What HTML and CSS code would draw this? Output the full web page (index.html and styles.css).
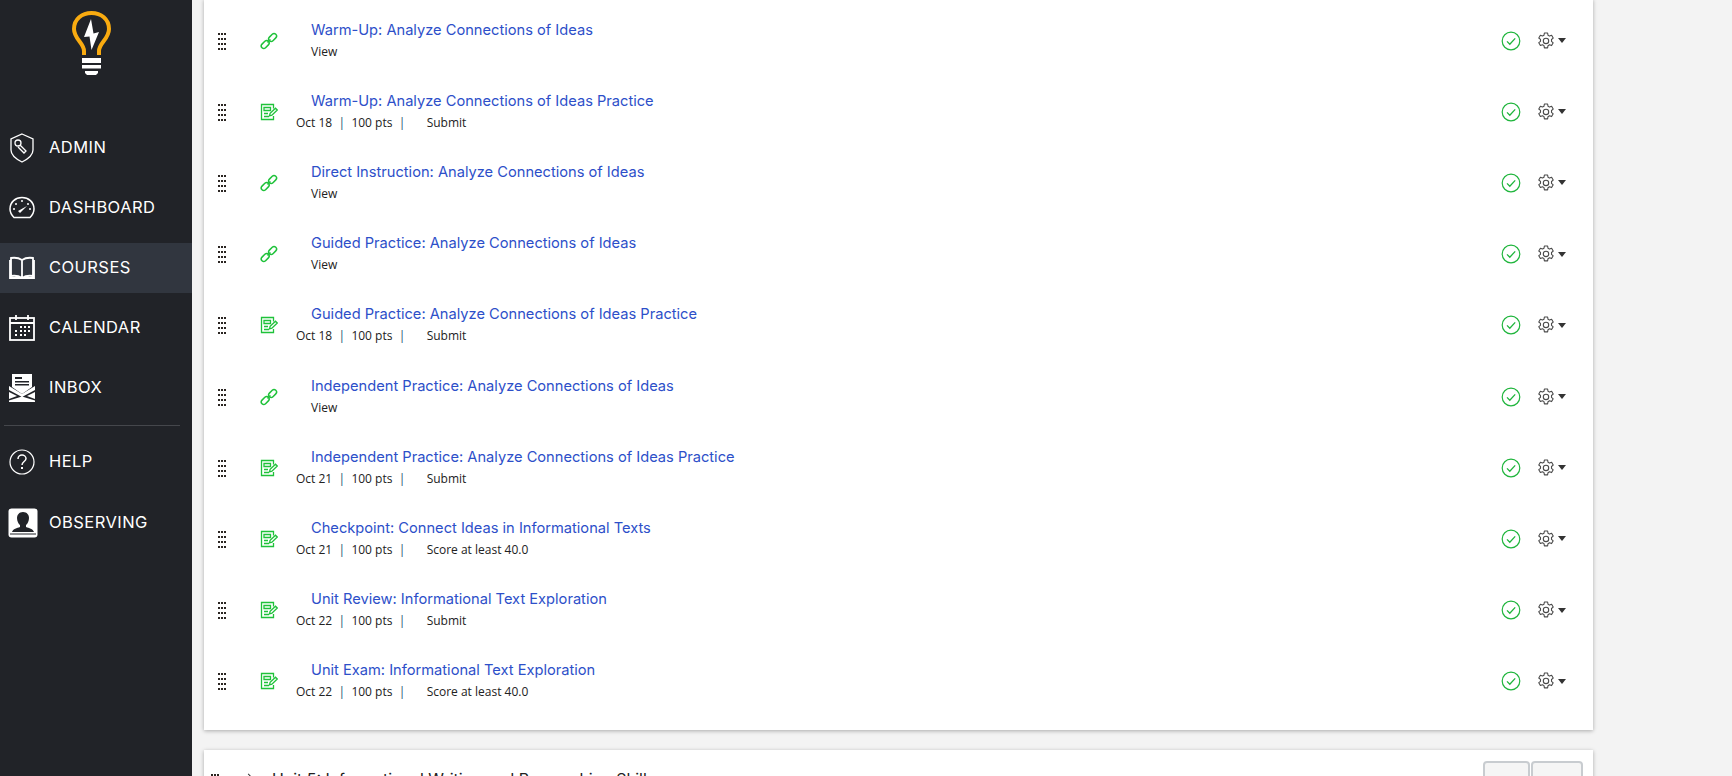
FILE: index.html
```html
<!DOCTYPE html>
<html lang="en">
<head>
  <meta charset="UTF-8" />
  <title>Modules</title>
  <link rel="stylesheet" href="styles.css">
</head>

<body>
  <svg class="sprites" width="0" height="0">
    <symbol id="i-drag" viewBox="0 0 10 18">
      <g fill="#2b2622">
        <rect x="1" y="1" width="2" height="2"/><rect x="4" y="1" width="2" height="2"/><rect x="7" y="1" width="2" height="2"/>
        <rect x="1" y="6" width="2" height="2"/><rect x="4" y="6" width="2" height="2"/><rect x="7" y="6" width="2" height="2"/>
        <rect x="1" y="11" width="2" height="2"/><rect x="4" y="11" width="2" height="2"/><rect x="7" y="11" width="2" height="2"/>
        <rect x="1" y="16" width="2" height="2"/><rect x="4" y="16" width="2" height="2"/><rect x="7" y="16" width="2" height="2"/>
      </g>
    </symbol>
    <symbol id="i-link" viewBox="0 0 18 18">
      <g fill="none" stroke="#1fc23a" stroke-width="1.5">
        <rect x="0.700" y="10" width="9" height="5" rx="2.500" transform="rotate(-45 5.200 12.500)"/>
        <rect x="8.100" y="3" width="9" height="5" rx="2.500" transform="rotate(-45 12.600 5.500)"/>
        <path d="M7.500 10.500 10.500 7.500"/>
      </g>
    </symbol>
    <symbol id="i-assign" viewBox="0 0 18 18">
      <g fill="none" stroke="#1fc23a" stroke-width="1.3">
        <path d="M13.500 5.500V1.500H1.500v15h12v-3.500"/>
        <path d="M4 4.500h6.500v3H4zM4 10.500h4M4 13.500h5"/>
        <path d="M9.500 12.800l.6-2.400 5.400-5.200 1.800 1.800-5.400 5.200z" fill="#fff"/>
      </g>
    </symbol>
    <symbol id="i-check" viewBox="0 0 20 20">
      <circle cx="10" cy="10" r="8.800" fill="none" stroke="#1fb53c" stroke-width="1.200"/>
      <path d="M6 10.400l2.800 2.800 5.400-5.800" fill="none" stroke="#1fb53c" stroke-width="1.300"/>
    </symbol>
    <symbol id="i-gear" viewBox="0 0 18 18">
      <path fill="none" stroke="#4a4a4a" stroke-width="1.100" stroke-linejoin="round" d="M7.400 1h3.200l.4 2.200 1.500.9 2.100-.8 1.600 2.800-1.700 1.400v1.900l1.700 1.400-1.600 2.800-2.100-.8-1.500.9-.4 2.200H7.400L7 13.600l-1.500-.9-2.100.8-1.600-2.800 1.700-1.400V7.400L1.800 6l1.600-2.800 2.100.8L7 3.200z"/>
      <circle cx="9" cy="8.900" r="2.700" fill="none" stroke="#4a4a4a" stroke-width="1.100"/>
    </symbol>
  </svg>

  <nav class="sidebar">
    <div class="logo">
      <svg width="40" height="64" viewBox="0 0 40 64">
        <path d="M12 44V40C12 32 2 28 2 18 2 8 10 2 19.500 2S37 8 37 18C37 28 27 32 27 40V44" fill="none" stroke="#f9ab10" stroke-width="4"/>
        <path d="M19 8 12 26l5.500-.5 2 13.500L27 21l-5.500 1.500z" fill="#fff"/>
        <rect x="10" y="47" width="19" height="5" fill="#fff"/>
        <rect x="10" y="54" width="19" height="3.500" fill="#fff"/>
        <path d="M13 60h13v2l-2 2h-9l-2-2z" fill="#fff"/>
      </svg>
    </div>

    <a class="nav-item">
      <svg width="26" height="30" viewBox="0 0 26 30"><g fill="none" stroke="#fff" stroke-width="1.300"><path d="M13 1 24 6v11c0 5-5 9-11 12C7 26 2 22 2 17V6z"/><circle cx="9" cy="10" r="3"/><path d="M11 12l6 6-2 2-6-6"/></g></svg>
      <span>ADMIN</span>
    </a>
    <a class="nav-item">
      <svg width="26" height="24" viewBox="0 0 26 24"><g fill="none" stroke="#fff" stroke-width="1.500"><path d="M5 21.500C2.500 19 1 16 1 13 1 6 6.500 1.500 13 1.500S25 6 25 13c0 3-1.500 6-4 8.500z"/></g><path d="M9 15l9-5-7 7z" fill="#fff"/><g fill="#fff"><circle cx="5" cy="13" r="1"/><circle cx="21" cy="13" r="1"/><circle cx="7" cy="8" r="1"/><circle cx="13" cy="5" r="1"/><circle cx="19" cy="8" r="1"/></g></svg>
      <span>DASHBOARD</span>
    </a>
    <a class="nav-item active">
      <svg width="26" height="24" viewBox="0 0 26 24"><g fill="none" stroke="#fff" stroke-width="1.800"><path d="M13 4C10 2 5 1.500 2 2v18c3-.5 8 0 11 2 3-2 8-2.500 11-2V2c-3-.5-8 0-11 2zM13 4v18"/><path d="M1 4v18h24V4"/></g></svg>
      <span>COURSES</span>
    </a>
    <a class="nav-item">
      <svg width="26" height="26" viewBox="0 0 26 26"><g fill="none" stroke="#fff" stroke-width="1.800"><rect x="1" y="3" width="24" height="22"/><path d="M1 8h24M7 0v5M19 0v5" /></g><g fill="#fff"><rect x="11" y="11" width="2" height="2"/><rect x="15" y="11" width="2" height="2"/><rect x="19" y="11" width="2" height="2"/><rect x="6" y="15" width="2" height="2"/><rect x="11" y="15" width="2" height="2"/><rect x="15" y="15" width="2" height="2"/><rect x="19" y="15" width="2" height="2"/><rect x="6" y="19" width="2" height="2"/><rect x="11" y="19" width="2" height="2"/><rect x="15" y="19" width="2" height="2"/></g></svg>
      <span>CALENDAR</span>
    </a>
    <a class="nav-item">
      <svg width="26" height="28" viewBox="0 0 26 28"><path d="M3 0h20v13l-10 7-10-7z" fill="#fff"/><path d="M6 3h7v2H6zM6 7h14v1.500H6zM6 10h14v1.500H6z" fill="#212328"/><path d="M0 12l13 8 13-8v4l-13 7-13-7zM0 18l8 4-8 3zM26 18l-8 4 8 3zM0 26.500l13-4 13 4V28H0z" fill="#fff"/></svg>
      <span>INBOX</span>
    </a>

    <hr class="nav-rule">

    <a class="nav-item nav-low">
      <svg width="26" height="26" viewBox="0 0 26 26"><circle cx="13" cy="13" r="12" fill="none" stroke="#fff" stroke-width="1.200"/><path d="M9 10c0-2.500 2-4 4-4s4 1.500 4 3.500c0 3-4 3-4 6.500" fill="none" stroke="#fff" stroke-width="1.500"/><rect x="12" y="18" width="2" height="2" fill="#fff"/></svg>
      <span>HELP</span>
    </a>
    <a class="nav-item nav-low">
      <svg class="nav-profile" width="30" height="30" viewBox="0 0 30 30"><rect x="0.500" y="0.500" width="29" height="29" rx="3" fill="#fff"/><path d="M15 4c4 0 6 3 6 6 0 3-1.500 6-3 7v2c3 1 7 2 8 5H4c1-3 5-4 8-5v-2c-1.500-1-3-4-3-7 0-3 2-6 6-6z" fill="#212328"/><path d="M2 26h26" stroke="#212328"/></svg>
      <span>OBSERVING</span>
    </a>
  </nav>

  <main class="content">
    <section class="card">
      <div class="row">
        <svg class="drag"><use href="#i-drag"/></svg>
        <svg class="type"><use href="#i-link"/></svg>
        <div class="info">
          <a class="title">Warm-Up: Analyze Connections of Ideas</a>
          <div class="meta view">View</div>
        </div>
        <svg class="check"><use href="#i-check"/></svg>
        <svg class="gear"><use href="#i-gear"/></svg>
        <span class="caret"></span>
      </div>
      <div class="row">
        <svg class="drag"><use href="#i-drag"/></svg>
        <svg class="type"><use href="#i-assign"/></svg>
        <div class="info">
          <a class="title">Warm-Up: Analyze Connections of Ideas Practice</a>
          <div class="meta"><span>Oct 18</span><i>|</i><span>100 pts</span><i>|</i><span class="req">Submit</span></div>
        </div>
        <svg class="check"><use href="#i-check"/></svg>
        <svg class="gear"><use href="#i-gear"/></svg>
        <span class="caret"></span>
      </div>
      <div class="row">
        <svg class="drag"><use href="#i-drag"/></svg>
        <svg class="type"><use href="#i-link"/></svg>
        <div class="info">
          <a class="title">Direct Instruction: Analyze Connections of Ideas</a>
          <div class="meta view">View</div>
        </div>
        <svg class="check"><use href="#i-check"/></svg>
        <svg class="gear"><use href="#i-gear"/></svg>
        <span class="caret"></span>
      </div>
      <div class="row">
        <svg class="drag"><use href="#i-drag"/></svg>
        <svg class="type"><use href="#i-link"/></svg>
        <div class="info">
          <a class="title">Guided Practice: Analyze Connections of Ideas</a>
          <div class="meta view">View</div>
        </div>
        <svg class="check"><use href="#i-check"/></svg>
        <svg class="gear"><use href="#i-gear"/></svg>
        <span class="caret"></span>
      </div>
      <div class="row">
        <svg class="drag"><use href="#i-drag"/></svg>
        <svg class="type"><use href="#i-assign"/></svg>
        <div class="info">
          <a class="title">Guided Practice: Analyze Connections of Ideas Practice</a>
          <div class="meta"><span>Oct 18</span><i>|</i><span>100 pts</span><i>|</i><span class="req">Submit</span></div>
        </div>
        <svg class="check"><use href="#i-check"/></svg>
        <svg class="gear"><use href="#i-gear"/></svg>
        <span class="caret"></span>
      </div>
      <div class="row">
        <svg class="drag"><use href="#i-drag"/></svg>
        <svg class="type"><use href="#i-link"/></svg>
        <div class="info">
          <a class="title">Independent Practice: Analyze Connections of Ideas</a>
          <div class="meta view">View</div>
        </div>
        <svg class="check"><use href="#i-check"/></svg>
        <svg class="gear"><use href="#i-gear"/></svg>
        <span class="caret"></span>
      </div>
      <div class="row">
        <svg class="drag"><use href="#i-drag"/></svg>
        <svg class="type"><use href="#i-assign"/></svg>
        <div class="info">
          <a class="title">Independent Practice: Analyze Connections of Ideas Practice</a>
          <div class="meta"><span>Oct 21</span><i>|</i><span>100 pts</span><i>|</i><span class="req">Submit</span></div>
        </div>
        <svg class="check"><use href="#i-check"/></svg>
        <svg class="gear"><use href="#i-gear"/></svg>
        <span class="caret"></span>
      </div>
      <div class="row">
        <svg class="drag"><use href="#i-drag"/></svg>
        <svg class="type"><use href="#i-assign"/></svg>
        <div class="info">
          <a class="title">Checkpoint: Connect Ideas in Informational Texts</a>
          <div class="meta"><span>Oct 21</span><i>|</i><span>100 pts</span><i>|</i><span class="req">Score at least 40.0</span></div>
        </div>
        <svg class="check"><use href="#i-check"/></svg>
        <svg class="gear"><use href="#i-gear"/></svg>
        <span class="caret"></span>
      </div>
      <div class="row">
        <svg class="drag"><use href="#i-drag"/></svg>
        <svg class="type"><use href="#i-assign"/></svg>
        <div class="info">
          <a class="title">Unit Review: Informational Text Exploration</a>
          <div class="meta"><span>Oct 22</span><i>|</i><span>100 pts</span><i>|</i><span class="req">Submit</span></div>
        </div>
        <svg class="check"><use href="#i-check"/></svg>
        <svg class="gear"><use href="#i-gear"/></svg>
        <span class="caret"></span>
      </div>
      <div class="row">
        <svg class="drag"><use href="#i-drag"/></svg>
        <svg class="type"><use href="#i-assign"/></svg>
        <div class="info">
          <a class="title">Unit Exam: Informational Text Exploration</a>
          <div class="meta"><span>Oct 22</span><i>|</i><span>100 pts</span><i>|</i><span class="req">Score at least 40.0</span></div>
        </div>
        <svg class="check"><use href="#i-check"/></svg>
        <svg class="gear"><use href="#i-gear"/></svg>
        <span class="caret"></span>
      </div>
    </section>

    <section class="card next-unit">
      <svg class="drag"><use href="#i-drag"/></svg>
      <span class="chevron"></span>
      <h3>Unit 5: Informational Writing and Researching Skills</h3>
      <div class="unit-btns">
        <button>+</button><button>&#9881;</button>
      </div>
    </section>
  </main>
</body>
</html>
```

FILE: styles.css
```css
html, body {
  margin: 0;
  height: 776px;
  overflow: hidden;
}

body {
  display: flex;
  background: #f3f3f3;
  font-family: "Open Sans", sans-serif;
  color: #222;
}

.sprites { position: absolute; }

/* sidebar */
.sidebar {
  width: 192px;
  height: 776px;
  flex: none;
  background: #212328;
  box-sizing: border-box;
  padding-top: 11px;
}

.logo {
  display: flex;
  justify-content: center;
  height: 112px;
  padding-right: 8px;
}

.nav-item {
  display: grid;
  grid-template-columns: 49px 1fr;
  align-items: center;
  height: 50px;
  margin-bottom: 10px;
  color: #fff;
  font-family: "Inter", sans-serif;
  font-size: 16.5px;
  letter-spacing: 0.45px;
}

.nav-item svg { margin-left: 9px; }
.nav-item .nav-profile { margin-left: 8px; }
.nav-item span { padding-bottom: 2px; }

.nav-item.active { background: #31363f; }
.nav-item.nav-low { margin-bottom: 11px; }

.nav-rule {
  border: 0;
  border-top: 1px solid #45474c;
  margin: 12px 12px 11px 4px;
}

/* main column */
.content {
  width: 1389px;
  margin-left: 12px;
  margin-top: -1px;
}

.card {
  background: #fff;
  box-shadow: 0 1px 4px rgba(0, 0, 0, 0.3);
}

.card:first-child {
  height: 731px;
  box-sizing: border-box;
  padding-top: 6px;
  margin-bottom: 20px;
}

.row {
  display: flex;
  align-items: center;
  height: 71.2px;
  padding-right: 27px;
}

.drag {
  width: 10px;
  height: 18px;
  margin-left: 13px;
  flex: none;
}

.type {
  width: 18px;
  height: 18px;
  margin-left: 33px;
  flex: none;
}

.info {
  flex: 1;
  margin-left: 18px;
}

.title {
  display: block;
  margin-left: 15px;
  color: #2d4fc9;
  font-family: "Inter", sans-serif;
  font-size: 14.65px;
  line-height: 20px;
}

.meta {
  display: flex;
  margin-top: 2px;
  font-size: 12px;
  line-height: 20px;
  color: #222;
}

.meta.view { margin-left: 15px; }

.meta i {
  font-style: normal;
  margin: 0 6.3px;
  color: #23506e;
}

.meta .req { margin-left: 15px; }

.check {
  width: 20px;
  height: 20px;
  flex: none;
}

.gear {
  width: 18px;
  height: 18px;
  margin-left: 16px;
  flex: none;
}

.caret {
  width: 0;
  height: 0;
  margin-left: 3px;
  border-left: 4px solid transparent;
  border-right: 4px solid transparent;
  border-top: 5px solid #333;
}

.next-unit {
  display: flex;
  align-items: flex-start;
  height: 60px;
  padding-top: 20px;
  box-sizing: border-box;
}

.next-unit h3 {
  margin: 0 0 0 20px;
  flex: 1;
  font-family: "Inter", sans-serif;
  font-weight: 400;
  font-size: 15.9px;
  color: #222;
  line-height: 20px;
}

.next-unit .drag {
  margin-top: 3px;
  margin-left: 6px;
}

.chevron {
  width: 6px;
  height: 6px;
  margin: 5px 0 0 25px;
  border-top: 1.5px solid #333;
  border-right: 1.5px solid #333;
  transform: rotate(45deg);
}

.unit-btns {
  display: flex;
  margin: -9px 10px 0 0;
}

.unit-btns button {
  height: 40px;
  border: 2px solid #c8ccd0;
  border-radius: 4px;
  background: #f5f5f5;
  color: #333;
  font-size: 13px;
  padding: 0;
  width: 47px;
}

.unit-btns button:last-child { width: 52px; margin-left: 1px; }
```
